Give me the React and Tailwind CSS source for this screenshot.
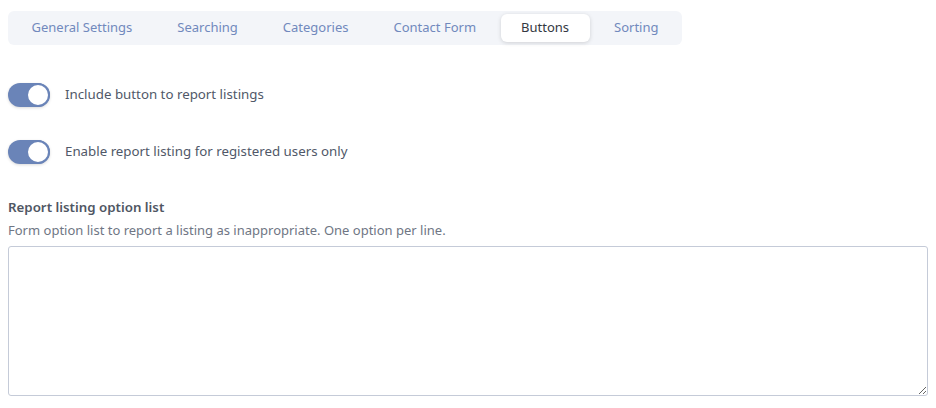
import React, { useState } from "react";

const tabs = ["General Settings", "Searching", "Categories", "Contact Form", "Buttons", "Sorting"];

const Toggle = ({ on, onClick }) => (
  <button
    onClick={onClick}
    className={`relative w-[42px] h-[24px] rounded-full flex-shrink-0 shadow-[0_1px_3px_rgba(0,0,0,0.15)] ${on ? "bg-[#6a84b8]" : "bg-[#d6dbe6]"}`}
  >
    <span
      className={`absolute top-0 w-[24px] h-[24px] rounded-full bg-white border-2 border-[#6a84b8] ${on ? "right-0" : "left-0"}`}
    />
  </button>
);

const App = () => {
  const [active, setActive] = useState("Buttons");
  const [reportBtn, setReportBtn] = useState(true);
  const [registered, setRegistered] = useState(true);

  return (
    <div className="w-[936px] h-[408px] bg-white px-2 pt-[11px] font-['Noto_Sans','Open_Sans',sans-serif]">
      {/* Tabs */}
      <div className="inline-flex items-center gap-1 bg-[#f3f5f9] rounded-md p-[3px]">
        {tabs.map((t) => (
          <button
            key={t}
            onClick={() => setActive(t)}
            className={`h-[28px] px-[20.5px] rounded-md text-[13px] ${
              active === t ? "bg-white text-[#333842] shadow-[0_1px_4px_rgba(0,0,0,0.15)]" : "text-[#7189bd]"
            }`}
          >
            {t}
          </button>
        ))}
      </div>

      {/* Toggles */}
      <div className="mt-[38px] flex items-center gap-[15px]">
        <Toggle on={reportBtn} onClick={() => setReportBtn(!reportBtn)} />
        <span className="text-[13.3px] text-[#505868]">Include button to report listings</span>
      </div>
      <div className="mt-[33px] flex items-center gap-[15px]">
        <Toggle on={registered} onClick={() => setRegistered(!registered)} />
        <span className="text-[13.3px] text-[#505868]">Enable report listing for registered users only</span>
      </div>

      {/* Option list */}
      <div className="mt-[34px]">
        <label className="block text-[13.3px] font-semibold text-[#4f5663]">Report listing option list</label>
        <p className="mt-[3px] text-[13px] text-[#6f7684]">
          Form option list to report a listing as inappropriate. One option per line.
        </p>
        <textarea className="mt-[6px] block w-[920px] h-[150px] border border-[#c5cbd8] rounded-[3px] outline-none p-2 text-[14px]" />
      </div>
    </div>
  );
};

export default App;
